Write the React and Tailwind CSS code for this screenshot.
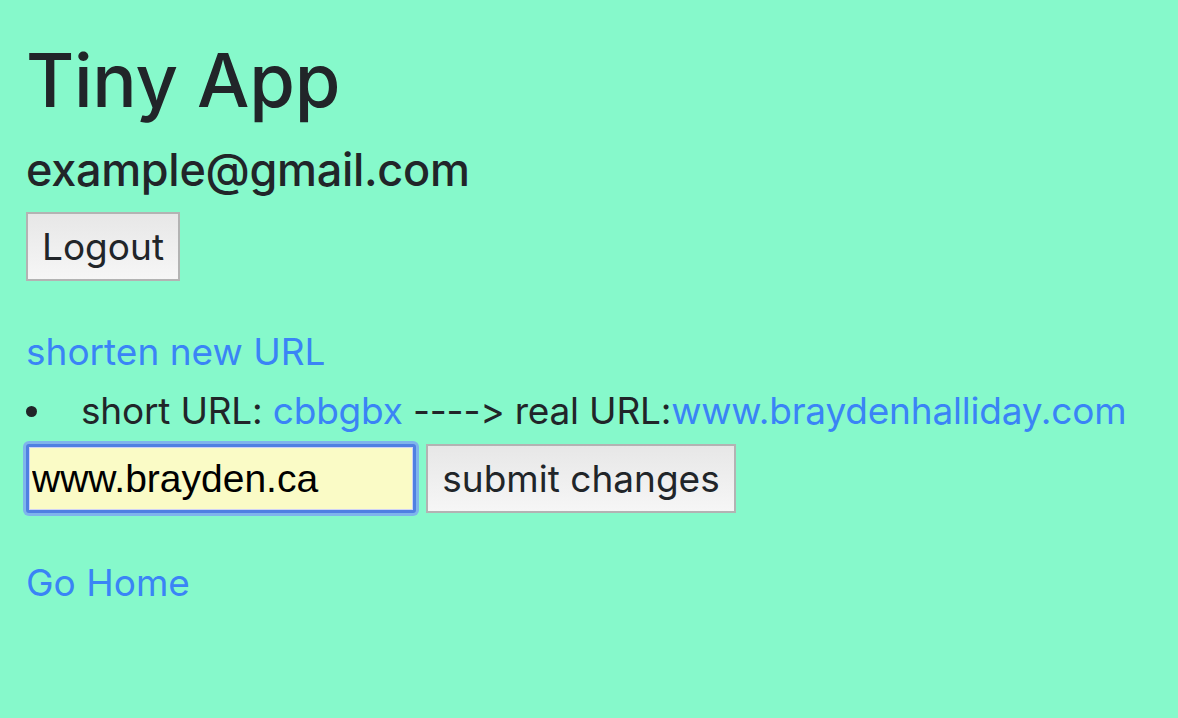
import React from 'react'

const sans = "font-['Inter','Noto_Sans',sans-serif] [font-feature-settings:'calt'_0,'liga'_0]"

function GrayButton({ children, className = '' }) {
  return (
    <button
      type="button"
      className={`border-2 border-[#b3b3b3] bg-gradient-to-b from-[#e7e7e7] to-[#f6f6f6] text-[#212529] ${className}`}
    >
      {children}
    </button>
  )
}

export default function App() {
  return (
    <div className={`min-h-[718px] w-full bg-[#86f9cb] px-[26px] pt-[32px] text-[#212529] ${sans}`}>
      <h1 className="text-[74px] font-medium leading-[96px] tracking-[-0.3px]">Tiny App</h1>
      <h3 className="mt-[14px] text-[45px] font-medium leading-[56px] tracking-[-0.3px]">
        example@gmail.com
      </h3>
      <GrayButton className="mt-[14px] flex h-[69px] w-[154px] items-center justify-center text-[37px]">
        Logout
      </GrayButton>

      <a href="#" className="mt-[48px] block text-[37px] leading-[46px] text-[#3a84f6]">
        shorten new URL
      </a>

      <ul className="mt-[13px] text-[37px] leading-[46px]">
        <li className="flex items-center whitespace-nowrap">
          <span className="mr-[44px] h-[11px] w-[11px] rounded-full bg-[#212529]" />
          <span className="tracking-[-0.2px]">
            short URL: <a href="#" className="text-[#3a84f6]">cbbgbx</a> ----&gt; real URL:
            <a href="#" className="text-[#3a84f6]">www.braydenhalliday.com</a>
          </span>
        </li>
      </ul>

      <form className="mt-[10px] flex items-center gap-[10px]">
        <input
          type="text"
          defaultValue="www.brayden.ca"
          className="h-[69px] w-[390px] rounded-[3px] border-[3px] border-[#4f80e2] bg-[#fafbc6] px-[3px] font-['Liberation_Sans',Arial,sans-serif] text-[39px] text-black shadow-[0_0_0_1px_#cfd3f5_inset,0_0_0_3px_#7fb4ec] outline-none"
        />
        <GrayButton className="h-[69px] w-[310px] text-[37px]">submit changes</GrayButton>
      </form>

      <a href="#" className="mt-[47px] block text-[37px] leading-[46px] text-[#3a84f6]">
        Go Home
      </a>
    </div>
  )
}
